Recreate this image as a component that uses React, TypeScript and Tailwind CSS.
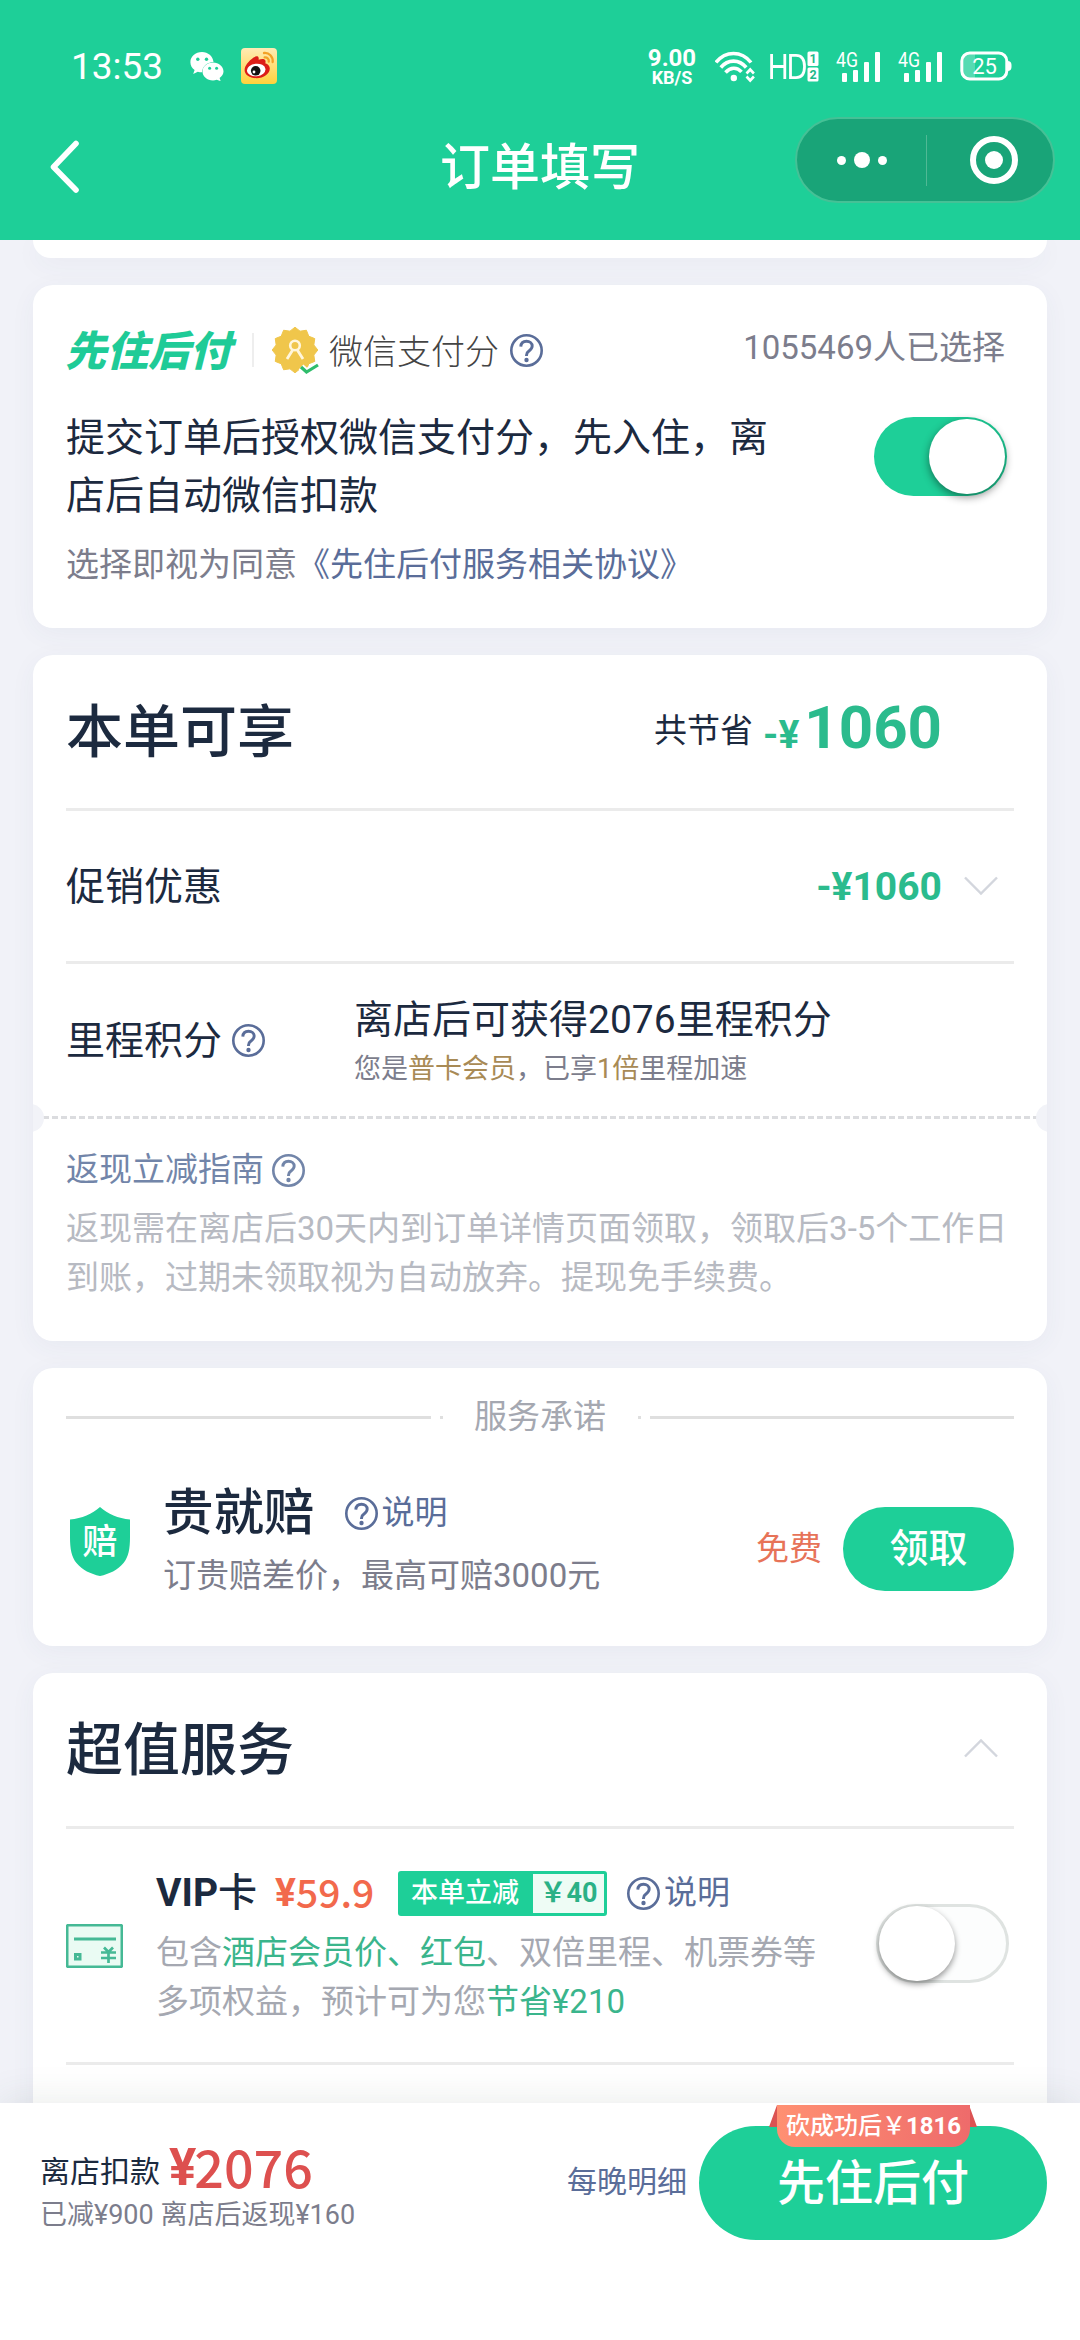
import { useState, type ReactNode } from "react";
import clsx from "clsx";

function HelpIcon({ className }: { className?: string }) {
  return (
    <svg viewBox="0 0 33 33" className={clsx("h-[33px] w-[33px] shrink-0", className)} fill="none" stroke="currentColor">
      <circle cx="16.5" cy="16.5" r="15.2" strokeWidth="2.600" />
      <path d="M10.800 12.600c.2-3.400 2.500-5.400 5.700-5.400s5.700 2 5.700 4.900c0 2.200-1.300 3.400-3 4.700-1.800 1.300-2.700 2.100-2.700 4.400v.8" strokeWidth="2.900" />
      <circle cx="16.5" cy="26" r="2.200" fill="currentColor" stroke="none" />
    </svg>
  );
}

function Chevron({ up }: { up?: boolean }) {
  return (
    <svg viewBox="0 0 34 20" className={clsx("h-[20px] w-[34px]", up && "rotate-180")} fill="none" stroke="#d3d6dd" strokeWidth="2.4">
      <path d="M1 1.5 17 17.5 33 1.5" />
    </svg>
  );
}

function Toggle({ initial }: { initial: boolean }) {
  const [on, setOn] = useState(initial);
  return (
    <button
      onClick={() => setOn(!on)}
      className={clsx(
        "flex h-[79px] w-[133px] cursor-pointer items-center rounded-full",
        on ? "justify-end bg-[#1ecf98] pr-[2px]" : "justify-start border-[3px] border-[#dfe3e1] bg-[#fcfdfd]"
      )}
    >
      <span className={clsx("h-[75px] w-[76px] shrink-0 rounded-full bg-white", on ? "shadow-[0_3px_8px_rgba(0,0,0,0.45)]" : "shadow-[0_3px_6px_rgba(0,0,0,0.42)]")} />
    </button>
  );
}

function Card({ children, className }: { children?: ReactNode; className?: string }) {
  return <section className={clsx("mx-[33px] rounded-[20px] bg-white px-[33px] shadow-[0_6px_26px_rgba(60,70,120,0.05)]", className)}>{children}</section>;
}

function Signal() {
  return (
    <svg viewBox="0 0 46 32" className="h-[32px] w-[46px] overflow-visible" fill="#fff">
      <text x="0" y="15.500" fontSize="21" fontFamily="Roboto, sans-serif" textLength="22" lengthAdjust="spacingAndGlyphs">4G</text>
      <rect x="6" y="22" width="5" height="9" rx="1" />
      <rect x="17" y="19" width="5" height="12" rx="1" />
      <rect x="28" y="11" width="5" height="20" rx="1" />
      <rect x="39" y="1" width="5" height="30" rx="1" />
    </svg>
  );
}

function StatusBar() {
  return (
    <div className="flex h-[100px] items-start pt-[48px] pr-[68px] pl-[71px] text-white">
      <span className="w-[119px] text-[37px] leading-[38px]">13:53</span>
      <svg viewBox="0 0 34 30" className="mt-[3px] h-[30px] w-[34px]">
        <path fill="#fff" d="M12 1C5.400 1 .4 5.500 .4 11.200c0 3.200 1.600 6 4.200 7.900L3.200 23l4.600-2.300c1.400.4 2.700.6 4.200.6.400-5.700 5-10 11.500-10.200C23 5.300 18 1 12 1z" />
        <path fill="#fff" d="M23 11.500c-5.800 0-10.500 4-10.500 9s4.700 8.900 10.500 8.900c1.300 0 2.500-.2 3.700-.6l3.900 1.300-1-3.200c2.400-1.600 3.900-3.900 3.900-6.400 0-5-4.700-9-10.500-9z" />
        <g fill="#1ecf98">
          <circle cx="7.800" cy="8.200" r="1.700" />
          <circle cx="16.500" cy="8.200" r="1.700" />
          <circle cx="19.600" cy="17.200" r="1.500" />
          <circle cx="26.600" cy="17.200" r="1.500" />
        </g>
      </svg>
      <svg viewBox="0 0 36 36" className="ml-[17px] h-[36px] w-[36px]">
        <defs>
          <linearGradient id="weibo" x1="0" y1="0" x2="0" y2="1">
            <stop offset="0" stopColor="#ffebb5" />
            <stop offset="1" stopColor="#ffd23c" />
          </linearGradient>
        </defs>
        <rect width="36" height="36" rx="4" fill="url(#weibo)" />
        <path fill="#dc1d17" d="M3.600 22c0-4 4-9 9-12.500 2-1.400 4.500-1.800 5 .2.300 1.200 0 2 0 2 3-1 6.500-1.200 6.900 1.300.2 1.400-.3 2.200-.3 2.200 2.800.8 4.600 2.700 4.600 5.300 0 5.200-6 9.700-13.300 9.700C8.800 30.200 3.600 27 3.600 22z" />
        <ellipse cx="15.200" cy="22" rx="9.300" ry="6.300" fill="#fff" transform="rotate(-6 15 22)" />
        <circle cx="14.700" cy="22.800" r="4.800" fill="#111" />
        <circle cx="13" cy="24" r="1.400" fill="#fff" />
        <path d="M23 5c5-.6 9.200 3.600 8.700 9M23.600 9.400c2.700-.3 4.500 1.700 4.200 4.300" fill="none" stroke="#f3a126" strokeWidth="2.300" strokeLinecap="round" />
      </svg>
      <div className="ml-auto flex w-[50px] flex-col items-center font-bold">
        <span className="text-[24px] leading-[21px]">9.00</span>
        <span className="text-[18px] leading-[18px]">KB/S</span>
      </div>
      <svg viewBox="0 0 40 32" className="ml-[18px] mt-[3px] h-[32px] w-[40px]" fill="none" stroke="#fff">
        <path d="M1 11.500C10.500-.5 26.500-.5 36 11.500" strokeWidth="3.600" />
        <path d="M5.800 16.500C12.800 8 24.200 8 31.200 16.500" strokeWidth="3.600" />
        <path d="M10.500 21.500c5-5.600 11.500-5.600 16-.6" strokeWidth="3.600" />
        <circle cx="18.800" cy="27" r="3.200" fill="#fff" stroke="none" />
        <path d="m31.500 22.500 3.700-4 3.700 4M31.500 25.500l3.700 4 3.700-4" strokeWidth="2.600" />
      </svg>
      <svg viewBox="0 0 50 32" className="ml-[15px] mt-[2px] h-[32px] w-[50px]">
        <g fill="none" stroke="#fff" strokeWidth="2.800">
          <path d="M1.600 4v25M1.600 16.500h13M14.800 4v25M20.500 5.400v22.200h5.500c5.500 0 8.500-3.500 8.500-11.100S31.500 5.400 26 5.400z" />
        </g>
        <rect x="37.500" y="1.500" width="11" height="14.500" rx="1.500" fill="#fff" />
        <rect x="37.500" y="17.500" width="11" height="14" rx="1.500" fill="#fff" />
        <g fill="#1eb98a" fontFamily="Roboto, sans-serif" fontSize="12.500" fontWeight="700" textAnchor="middle">
          <text x="43" y="13.300">1</text>
          <text x="43" y="29">2</text>
        </g>
      </svg>
      <div className="mt-[3px] ml-[16px] flex gap-[16px]">
        <Signal />
        <Signal />
      </div>
      <svg viewBox="0 0 52 30" className="ml-[16px] mt-[3px] h-[30px] w-[52px]">
        <path d="M9 3h6v24H9a7 7 0 0 1-7-7V10a7 7 0 0 1 7-7z" fill="#fff" opacity=".25" />
        <rect x="1.800" y="2" width="45" height="26" rx="8" fill="none" stroke="#fff" strokeWidth="3" />
        <path d="M48 10c3 .5 3.500 2 3.500 5s-.5 4.500-3.500 5z" fill="#fff" />
        <text x="24.500" y="23" fill="#fff" fontSize="22" fontFamily="Roboto, sans-serif" textAnchor="middle">25</text>
      </svg>
    </div>
  );
}

function NavBar() {
  return (
    <div className="grid h-[140px] grid-cols-[1fr_auto_1fr] items-start text-white">
      <svg viewBox="0 0 30 54" className="mt-[40px] ml-[50px] h-[54px] w-[30px]" fill="none" stroke="#fff" strokeWidth="5.600" strokeLinecap="round" strokeLinejoin="round">
        <path d="M26 3.500 3.500 27 26 50" />
      </svg>
      <h1 className="mt-[38px] text-[50px] leading-[60px] font-medium">订单填写</h1>
      <div className="mt-[17px] mr-[25px] flex h-[86px] w-[260px] items-center justify-self-end rounded-full border-2 border-[#45c196] bg-[#19a478]">
        <div className="flex w-[129px] items-center justify-center gap-[8px]">
          <i className="h-[9px] w-[9px] rounded-full bg-white" />
          <i className="h-[16px] w-[16px] rounded-full bg-white" />
          <i className="h-[9px] w-[9px] rounded-full bg-white" />
        </div>
        <i className="h-[51px] w-px bg-[#50b995]" />
        <div className="flex flex-1 items-center justify-center pl-[7px]">
          <div className="flex h-[48px] w-[48px] items-center justify-center rounded-full border-[6px] border-white">
            <i className="h-[18px] w-[18px] rounded-full bg-white" />
          </div>
        </div>
      </div>
    </div>
  );
}

function ScoreBadge() {
  const points = Array.from({ length: 24 }, (_, i) => {
    const r = i % 2 ? 19.5 : 22.8;
    const a = (i * Math.PI) / 12 - Math.PI / 2;
    return `${23 + r * Math.cos(a)},${23 + r * Math.sin(a)}`;
  }).join(" ");
  return (
    <svg viewBox="0 0 48 48" className="h-[48px] w-[48px]" fill="none">
      <polygon points={points} fill="#f0c64b" stroke="#f0c64b" strokeLinejoin="round" />
      <circle cx="23" cy="18.500" r="4.800" stroke="#fff6dc" strokeWidth="2.600" />
      <path d="m15 32 6-9.500M31 32l-6-9.500" stroke="#fff6dc" strokeWidth="2.800" />
      <path d="m29 40 5.500 5L46 38" stroke="#fff" strokeWidth="7" />
      <path d="m29 40 5.500 5L46 38" stroke="#2fbd6b" strokeWidth="3.200" />
    </svg>
  );
}

function PayLaterCard() {
  return (
    <Card className="mt-[27px] h-[343px]">
      <div className="flex h-[110px] items-center pt-[24px]">
        <span className="-ml-[1px] w-[187px] text-[41.500px] leading-[42px] font-black text-[#1fcb97] italic">先住后付</span>
        <i className="mt-[-4px] h-[34px] w-[2px] bg-[#eeeeee]" />
        <div className="mt-[-2px] ml-[18px]">
          <ScoreBadge />
        </div>
        <span className="ml-[9px] text-[34px] leading-[40px] font-light text-[#444]">微信支付分</span>
        <HelpIcon className="mt-[-4px] ml-[11px] text-[#5a6d99]" />
        <span className="mt-[-8px] mr-[9px] ml-auto text-[33px] leading-[40px] text-[#7c7d8c]">1055469人已选择</span>
      </div>
      <div className="mt-[14px] flex h-[116px] items-start justify-between">
        <p className="w-[710px] text-[39px] leading-[58px] text-[#1c2a3f]">提交订单后授权微信支付分，先入住，离店后自动微信扣款</p>
        <div className="mt-[8px] mr-[7px]">
          <Toggle initial />
        </div>
      </div>
      <p className="mt-[16px] text-[33px] leading-[48px] text-[#7c7d8c]">
        选择即视为同意<span className="text-[#5a6d99]">《先住后付服务相关协议》</span>
      </p>
    </Card>
  );
}

function BenefitsCard() {
  return (
    <Card className="relative mt-[27px] h-[686px]">
      <div className="flex h-[156px] items-center justify-between border-b-[3px] border-[#ebebeb] pr-[72px]">
        <h2 className="pt-[3px] text-[57px] leading-[60px] font-medium text-[#1c2a3f]">本单可享</h2>
        <div className="flex items-baseline pt-[2px] text-[#2bbb8d]">
          <span className="relative -top-[6px] text-[33px] leading-[60px] text-[#1c2a3f]">共节省</span>
          <span className="ml-[10px] text-[39px] font-bold">-¥</span>
          <span className="ml-[5px] text-[60px] leading-[60px] font-bold">1060</span>
        </div>
      </div>
      <div className="flex h-[153px] items-center border-b-[3px] border-[#ebebeb] pr-[16px] text-[39px] leading-[50px]">
        <span className="pt-[2px] text-[#1c2a3f]">促销优惠</span>
        <span className="mr-[22px] ml-auto pt-[2px] font-bold text-[#2bbb8d]">-¥1060</span>
        <Chevron />
      </div>
      <div className="flex h-[152px] items-center text-[#1c2a3f]">
        <span className="pt-[1px] text-[39px] leading-[50px]">里程积分</span>
        <HelpIcon className="mt-[1px] ml-[10px] text-[#5a6d99]" />
        <div className="ml-[89px] pt-[3px]">
          <p className="text-[39px] leading-[54px]">离店后可获得2076里程积分</p>
          <p className="text-[27px] leading-[44px] text-[#7c7d8c]">
            您是<span className="text-[#a88a55]">普卡会员</span>，已享<span className="text-[#a88a55]">1倍</span>里程加速
          </p>
        </div>
      </div>
      <div className="-mx-[23px] h-[3px] bg-[repeating-linear-gradient(90deg,#dbdcdf_0_6px,transparent_6px_9px)]" />
      {/* ticket notches */}
      <i className="absolute top-[449px] left-[-17px] h-[28px] w-[28px] rounded-full bg-[#f2f3f8] [clip-path:inset(0_0_0_17px)]" />
      <i className="absolute top-[449px] right-[-17px] h-[28px] w-[28px] rounded-full bg-[#f2f3f8] [clip-path:inset(0_17px_0_0)]" />
      <div className="flex items-center pt-[26px] text-[#7285a9]">
        <span className="text-[33px] leading-[50px]">返现立减指南</span>
        <HelpIcon className="ml-[8px]" />
      </div>
      <p className="-mr-[10px] mt-[9px] text-[33px] leading-[49px] text-[#b7bac2]">
        返现需在离店后30天内到订单详情页面领取，领取后3-5个工作日到账，过期未领取视为自动放弃。提现免手续费。
      </p>
    </Card>
  );
}

function PromiseCard() {
  return (
    <Card className="mt-[27px] h-[278px]">
      <div className="flex h-[98px] items-center gap-[9px]">
        <i className="h-[3px] flex-1 bg-[#dfdfdf]" />
        <i className="h-[3px] w-[3px] bg-[#dfdfdf]" />
        <span className="pr-[23px] pl-[22px] text-[33px] leading-[42px] text-[#a5a8b1]">服务承诺</span>
        <i className="h-[3px] w-[3px] bg-[#dfdfdf]" />
        <i className="h-[3px] w-[364px] bg-[#dfdfdf]" />
      </div>
      <div className="flex items-center pt-[13px]">
        <svg viewBox="0 0 60 69" className="mt-[-2px] ml-[4px] h-[69px] w-[60px]">
          <path d="M30 0c8 7 18 11.500 30 12.500V30c0 12-1.500 20-6.500 26-6 7-14 11-23.500 13C20.500 67 12.500 63 6.500 56 1.500 50 0 42 0 30V12.500C12 11.500 22 7 30 0z" fill="#1ecf98" />
          <text x="30" y="47" fill="#fff" fontSize="35" fontWeight="500" textAnchor="middle">赔</text>
        </svg>
        <div className="ml-[33px]">
          <div className="flex items-center">
            <span className="text-[50.500px] leading-[68px] font-medium text-[#1c2a3f]">贵就赔</span>
            <HelpIcon className="mr-[4px] ml-[30px] text-[#5a6d99]" />
            <span className="text-[33px] leading-[50px] text-[#5a6d99]">说明</span>
          </div>
          <p className="text-[33px] leading-[58px] text-[#7c7d8c]">订贵赔差价，最高可赔3000元</p>
        </div>
        <span className="mt-[14px] mr-[21px] ml-auto text-[33px] text-[#e77358]">免费</span>
        <button className="mt-[14px] h-[84px] w-[171px] cursor-pointer rounded-full bg-[#1ecf98] text-[39px] font-medium text-white">领取</button>
      </div>
    </Card>
  );
}

function ExtrasCard() {
  return (
    <Card className="mt-[27px] h-[520px]">
      <div className="flex h-[156px] items-center justify-between border-b-[3px] border-[#ebebeb] pr-[16px]">
        <h2 className="pt-[3px] text-[57px] leading-[60px] font-medium text-[#1c2a3f]">超值服务</h2>
        <div className="pb-[3px]">
          <Chevron up />
        </div>
      </div>
      <div className="flex h-[236px] items-center border-b-[3px] border-[#ebebeb]">
        <svg viewBox="0 0 57 44" className="h-[44px] w-[57px]" fill="none" stroke="#45b995">
          <rect x="1.200" y="1.200" width="54.600" height="41.600" rx="1" fill="#eafbf3" strokeWidth="2.600" />
          <path d="M8 15h42" strokeWidth="3.200" />
          <rect x="9.500" y="30.500" width="4.500" height="4.500" strokeWidth="3" />
          <path d="m38 23.500 4.500 4.500 4.500-4.500M35 28.500h15M35 34h15M42.500 28v11" strokeWidth="2.700" />
        </svg>
        <div className="ml-[33px] w-[671px] pb-[2px]">
          <div className="flex items-center">
            <span className="text-[39px] leading-[60px] text-[#1c2a3f]"><span className="font-bold">VIP</span><span className="font-medium">卡</span></span>
            <span className="ml-[18px] text-[39px] leading-[60px] font-bold text-[#f2694c]">¥</span>
            <span className="mt-[-4px] font-['Noto_Sans_CJK_SC',sans-serif] text-[39px] leading-[60px] font-medium text-[#f2694c]">59.9</span>
            <span className="ml-auto flex h-[45px] items-center rounded-[3px] bg-[#1ecf98] pr-[3px] pl-[13px] text-[27px] font-medium text-white">
              本单立减
              <span className="ml-[14px] flex h-[39px] w-[71px] items-center justify-center bg-[#eefcf5] font-bold text-[#2bb186]">￥40</span>
            </span>
            <HelpIcon className="mr-[4px] ml-[20px] text-[#5a6d99]" />
            <span className="mr-[97px] text-[33px] text-[#5a6d99]">说明</span>
          </div>
          <p className="mt-[5px] text-[33px] leading-[49px] text-[#a5a8b1]">
            包含<span className="text-[#3ab58c]">酒店会员价、红包</span>、双倍里程、机票券等多项权益，预计可为您<span className="text-[#3ab58c]">节省¥210</span>
          </p>
        </div>
        <div className="mr-[5px] ml-auto pb-[5px]">
          <Toggle initial={false} />
        </div>
      </div>
    </Card>
  );
}

function CheckoutBar() {
  return (
    <footer className="relative flex h-[237px] items-start bg-white pr-[33px] pl-[40px] shadow-[0_-4px_34px_rgba(60,80,70,0.1)]">
      <div className="pt-[33px]">
        <div className="flex h-[64px] items-center">
          <span className="mt-[8px] text-[30px] leading-[40px] text-[#1c2a3f]">离店扣款</span>
          <span className="ml-[9px] text-[51px] leading-[60px] font-bold text-[#dd504f]">¥</span>
          <span className="mt-[-5px] -ml-[2px] font-['Noto_Sans_CJK_SC',sans-serif] text-[52px] leading-[60px] font-medium text-[#dd504f]">2076</span>
        </div>
        <p className="text-[27px] leading-[30px] text-[#7c7d8c]">已减¥900 离店后返现¥160</p>
      </div>
      <span className="mt-[59px] mr-[12px] ml-auto text-[30px] leading-[40px] text-[#5a6d99]">每晚明细</span>
      <button className="relative mt-[23px] h-[114px] w-[348px] cursor-pointer rounded-full bg-[#1ecf98] pt-[2px] text-[48px] font-medium text-white">
        先住后付
        <svg viewBox="0 0 208 22" className="absolute top-[-21px] left-[70px] h-[22px] w-[208px]" fill="#dc5353">
          <path d="M8 0v22H0zM200 0v22h8z" />
        </svg>
        <span className="absolute top-[-21px] left-[78px] flex h-[42px] w-[193px] items-center justify-center rounded-b-[18px] bg-linear-to-r from-[#ff9072] to-[#ee6b6b] text-[24px] whitespace-nowrap">
          砍成功后￥<b>1816</b>
        </span>
      </button>
    </footer>
  );
}

export default function App() {
  return (
    <div className="flex h-[2340px] w-[1080px] flex-col overflow-hidden bg-[#f1f2f8] font-[Roboto,'Noto_Sans_CJK_SC',sans-serif]">
      <header className="h-[240px] bg-[#1ecf98]">
        <StatusBar />
        <NavBar />
      </header>
      <main className="h-[1863px] overflow-hidden">
        <Card className="h-[18px] rounded-t-none" />
        <PayLaterCard />
        <BenefitsCard />
        <PromiseCard />
        <ExtrasCard />
      </main>
      <CheckoutBar />
    </div>
  );
}
